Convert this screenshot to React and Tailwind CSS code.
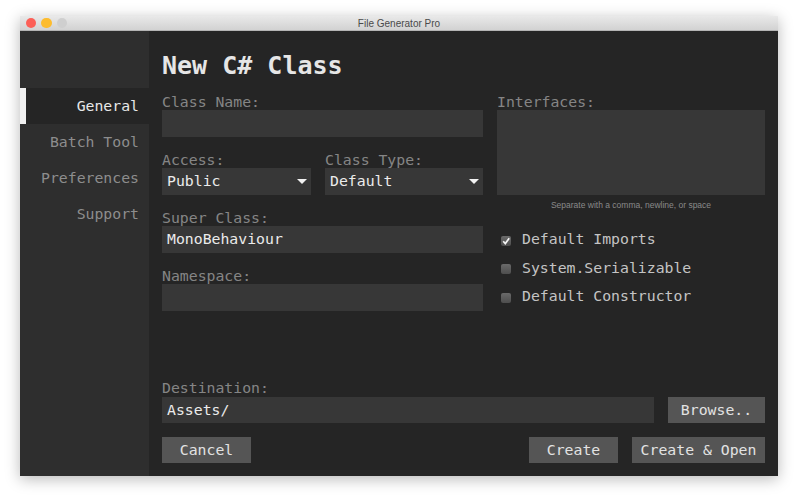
import React from "react";

const mono = "font-['DejaVu_Sans_Mono',monospace]";

const Label = ({ children }) => (
  <div className="h-[17px] leading-[17px] text-[14.8px] text-[#858585] whitespace-nowrap">{children}</div>
);

const Field = ({ value, className = "h-[27px]" }) => (
  <div className={`${className} bg-[#373737] pl-[5px] flex items-center text-[14.8px] text-[#ebebeb] whitespace-nowrap`}>
    {value}
  </div>
);

const Select = ({ value, width }) => (
  <div className={`${width} h-[27px] bg-[#373737] pl-[5px] pr-[4px] flex items-center justify-between text-[14.8px] text-[#ebebeb]`}>
    <span>{value}</span>
    <svg width="10" height="5" viewBox="0 0 10 5">
      <polygon points="0,0 10,0 5,5" fill="#f2f2f2" />
    </svg>
  </div>
);

const Check = ({ label, checked }) => (
  <div className="h-[28.5px] flex items-center pl-[4px] gap-[11px]">
    <div className="w-[10px] h-[10px] mt-[3px] rounded-[2px] bg-gradient-to-b from-[#6a6a6a] to-[#4e4e4e] flex items-center justify-center">
      {checked && (
        <svg width="10" height="10" viewBox="0 0 10 10">
          <path d="M2.2 5.2 L4.3 7.6 L8.2 2.2" stroke="#f4f4f4" strokeWidth="1.7" fill="none" />
        </svg>
      )}
    </div>
    <span className="text-[14.8px] text-[#c4c4c4] whitespace-nowrap">{label}</span>
  </div>
);

const Button = ({ children, width }) => (
  <div className={`${width} h-[26px] bg-[#555555] flex items-center justify-center text-[14.8px] text-[#e2e2e2] whitespace-nowrap`}>
    {children}
  </div>
);

const navItems = ["General", "Batch Tool", "Preferences", "Support"];

export default function App() {
  return (
    <div className={`w-[799px] h-[501px] bg-white pt-[16px] pl-[20px] overflow-hidden ${mono}`}>
      <div className="w-[758px] h-[460px] flex flex-col shadow-[0_3px_14px_rgba(0,0,0,0.28)]">
        {/* title bar */}
        <div className="h-[15px] bg-gradient-to-b from-[#e9e9e9] to-[#d2d2d2] border-b border-[#b4b4b4] flex items-center relative">
          <div className="flex gap-[5px] pl-[5.5px]">
            <div className="w-[10.5px] h-[10.5px] rounded-full bg-[#fc5f57]" />
            <div className="w-[10.5px] h-[10.5px] rounded-full bg-[#fdbc2e]" />
            <div className="w-[10.5px] h-[10.5px] rounded-full bg-[#cfcfcf]" />
          </div>
          <div className="absolute inset-0 flex items-center justify-center text-[10px] text-[#4a4a4a] font-['Liberation_Sans',sans-serif]">
            File Generator Pro
          </div>
        </div>

        <div className="flex-1 flex">
          {/* sidebar */}
          <div className="w-[129px] bg-[#2e2e2e] pt-[57px]">
            {navItems.map((item, i) => (
              <div
                key={item}
                className={
                  i === 0
                    ? "h-9 bg-[#252525] border-l-[6px] border-[#f0f0f0] flex items-center justify-end pr-[10px] text-[14.8px] text-[#e8e8e8]"
                    : "h-9 flex items-center justify-end pr-[10px] text-[14.8px] text-[#8d8d8d]"
                }
              >
                {item}
              </div>
            ))}
          </div>

          {/* main */}
          <div className="flex-1 bg-[#252525] px-[13px] pt-[20px] pb-[13px] flex flex-col">
            <div className="h-[30px] leading-[30px] text-[25px] font-bold text-[#e6e6e6]">New C# Class</div>

            <div className="mt-[12px] flex gap-[14px]">
              <div className="w-[321px] flex flex-col gap-[14px]">
                <div>
                  <Label>Class Name:</Label>
                  <Field value="" />
                </div>
                <div className="flex gap-[14px]">
                  <div>
                    <Label>Access:</Label>
                    <Select value="Public" width="w-[149px]" />
                  </div>
                  <div>
                    <Label>Class Type:</Label>
                    <Select value="Default" width="w-[158px]" />
                  </div>
                </div>
                <div>
                  <Label>Super Class:</Label>
                  <Field value="MonoBehaviour" />
                </div>
                <div>
                  <Label>Namespace:</Label>
                  <Field value="" />
                </div>
              </div>

              <div className="w-[268px]">
                <Label>Interfaces:</Label>
                <div className="h-[85px] bg-[#373737]" />
                <div className="mt-[4px] h-[12px] leading-[12px] text-center text-[8.5px] text-[#8a8a8a] font-['Liberation_Sans',sans-serif]">
                  Separate with a comma, newline, or space
                </div>
                <div className="mt-[14px]">
                  <Check label="Default Imports" checked />
                  <Check label="System.Serializable" />
                  <Check label="Default Constructor" />
                </div>
              </div>
            </div>

            <div className="mt-auto">
              <Label>Destination:</Label>
              <div className="mt-[1px] flex gap-[14px]">
                <div className="flex-1">
                  <Field value="Assets/" className="h-[26px]" />
                </div>
                <Button width="w-[97px]">Browse..</Button>
              </div>
              <div className="mt-[14px] flex">
                <Button width="w-[89px]">Cancel</Button>
                <div className="flex-1" />
                <div className="flex gap-[14px]">
                  <Button width="w-[89px]">Create</Button>
                  <Button width="w-[133px]">Create &amp; Open</Button>
                </div>
              </div>
            </div>
          </div>
        </div>
      </div>
    </div>
  );
}
